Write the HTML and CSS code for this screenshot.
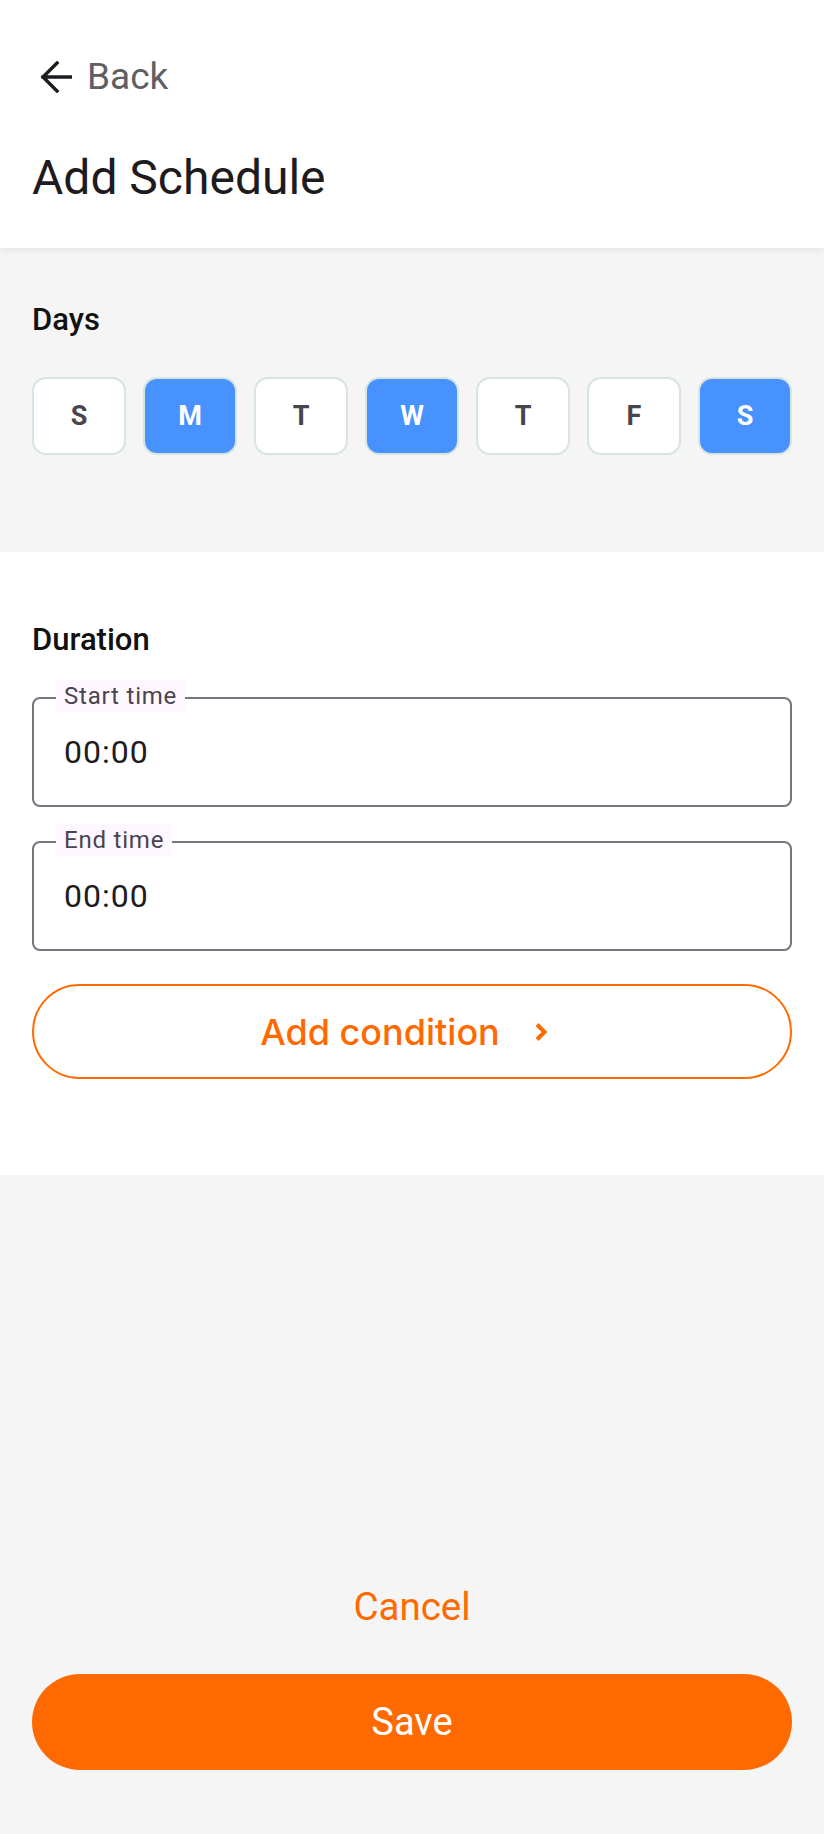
FILE: index.html
```html
<!DOCTYPE html>
<html lang="en">
<head>
<meta charset="utf-8">
<title>Add Schedule</title>
<link rel="stylesheet" href="styles.css">
</head>
<body>
<div class="page">
  <header class="header">
    <div class="back">
      <svg class="back-icon" width="32" height="32" viewBox="0 0 32 32" fill="none">
        <path d="M32 16H3M17 2L3 16l14 14" stroke="#1d1b20" stroke-width="3.4" stroke-linecap="square" stroke-linejoin="miter"/>
      </svg>
      <span class="back-text">Back</span>
    </div>
    <h1 class="title">Add Schedule</h1>
  </header>

  <section class="days">
    <h2 class="section-label">Days</h2>
    <div class="day-grid">
      <div class="day">S</div>
      <div class="day day-on">M</div>
      <div class="day">T</div>
      <div class="day day-on">W</div>
      <div class="day">T</div>
      <div class="day">F</div>
      <div class="day day-on">S</div>
    </div>
  </section>

  <section class="duration">
    <h2 class="section-label">Duration</h2>
    <div class="field">
      <span class="field-label">Start time</span>
      <span class="field-value">00:00</span>
    </div>
    <div class="field">
      <span class="field-label">End time</span>
      <span class="field-value">00:00</span>
    </div>
    <div class="add-btn">
      <span class="add-text">Add condition</span>
      <svg class="chev" width="24" height="24" viewBox="0 0 24 24" fill="none">
        <path d="M7 4.5l7.5 7.5L7 19.5" stroke="#ff6a00" stroke-width="4" stroke-linecap="butt" stroke-linejoin="miter"/>
      </svg>
    </div>
  </section>

  <footer class="footer">
    <div class="cancel">Cancel</div>
    <div class="save">Save</div>
  </footer>
</div>
</body>
</html>
```

FILE: styles.css
```css
* { box-sizing: border-box; }

html, body {
  margin: 0;
  padding: 0;
}

body {
  font-family: Roboto, "Noto Sans", sans-serif;
  background: #f5f5f5;
  color: #1d1b20;
}

.page {
  min-height: 1834px;
  display: flex;
  flex-direction: column;
}

.header {
  position: relative;
  z-index: 1;
  background: #ffffff;
  padding: 59px 32px 42px 32px;
  box-shadow: 0 2px 7px rgba(0, 0, 0, 0.07);
}

.back {
  display: flex;
  align-items: center;
  height: 36px;
  padding-left: 8px;
  gap: 15px;
}

.back-icon {
  display: block;
  flex: none;
}

.back-text {
  font-size: 37px;
  line-height: 36px;
  color: #5f5f62;
}

.title {
  margin: 55px 0 0 0;
  font-size: 48px;
  line-height: 56px;
  font-weight: 400;
  color: #1d1b20;
}

.section-label {
  margin: 0;
  font-size: 31px;
  line-height: 40px;
  font-weight: 500;
  color: #111111;
}

.days {
  background: #f5f5f5;
  padding: 52px 32px 97px 32px;
}

.day-grid {
  margin-top: 37px;
  display: grid;
  grid-template-columns: repeat(7, 1fr);
  gap: 17px;
}

.day {
  height: 78px;
  border: 2px solid #d7e5e1;
  border-radius: 14px;
  background: #ffffff;
  display: flex;
  align-items: center;
  justify-content: center;
  font-size: 27px;
  font-weight: 700;
  color: #48464c;
}

.day-on {
  background: #4892ff;
  color: #ffffff;
}

.duration {
  background: #ffffff;
  padding: 68px 32px 96px 32px;
  display: flex;
  flex-direction: column;
}

.field {
  position: relative;
  margin-top: 37px;
  height: 110px;
  border: 2px solid #79747e;
  border-radius: 8px;
  padding: 0 30px;
  display: flex;
  align-items: center;
}

.field + .field {
  margin-top: 34px;
}

.field-label {
  position: absolute;
  left: 22px;
  top: -19px;
  height: 32px;
  padding: 0 8px;
  background: #fef7ff;
  font-size: 24px;
  line-height: 32px;
  letter-spacing: 0.8px;
  color: #49454f;
}

.field-value {
  font-size: 32px;
  line-height: 48px;
  letter-spacing: 1px;
  color: #1d1b20;
}

.add-btn {
  margin-top: 33px;
  height: 95px;
  border: 2px solid #ff6a00;
  border-radius: 48px;
  display: flex;
  align-items: center;
  justify-content: center;
  gap: 30px;
  padding-right: 10px;
}

.add-text {
  font-family: Inter, Roboto, sans-serif;
  font-size: 36px;
  font-weight: 500;
  line-height: 44px;
  color: #ff6a00;
}

.chev {
  display: block;
  flex: none;
}

.footer {
  margin-top: auto;
  padding: 0 32px 64px 32px;
  display: flex;
  flex-direction: column;
  align-items: stretch;
}

.cancel {
  text-align: center;
  font-size: 38.5px;
  line-height: 48px;
  color: #ff6a00;
}

.save {
  margin-top: 43px;
  height: 96px;
  border-radius: 48px;
  background: #ff6a00;
  color: #ffffff;
  font-size: 38px;
  line-height: 48px;
  display: flex;
  align-items: center;
  justify-content: center;
}
```
